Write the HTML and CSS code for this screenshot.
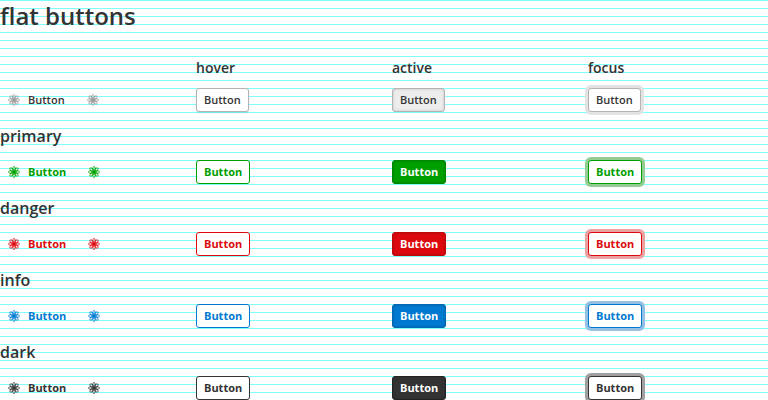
FILE: index.html
```html
<!DOCTYPE html>
<html lang="en">
<head>
<meta charset="utf-8">
<title>flat buttons</title>
<link rel="stylesheet" href="styles.css">
</head>
<body>
<svg class="sprite" aria-hidden="true">
  <symbol id="atom" viewBox="0 0 12 12">
    <g fill="none" stroke="currentColor" stroke-width="0.75">
      <ellipse cx="6" cy="6" rx="5.6" ry="1.8"/>
      <ellipse cx="6" cy="6" rx="5.6" ry="1.8" transform="rotate(45 6 6)"/>
      <ellipse cx="6" cy="6" rx="5.6" ry="1.8" transform="rotate(90 6 6)"/>
      <ellipse cx="6" cy="6" rx="5.6" ry="1.8" transform="rotate(135 6 6)"/>
    </g>
    <circle cx="6" cy="6" r="1.5" fill="currentColor"/>
  </symbol>
</svg>
<main>
  <h1>flat buttons</h1>
  <div class="grid heads">
    <span></span>
    <h3>hover</h3>
    <h3>active</h3>
    <h3>focus</h3>
  </div>
  <div class="grid plain">
    <div class="pair">
      <button class="btn" type="button"><svg class="icon"><use href="#atom"/></svg>Button</button>
      <button class="btn" type="button" aria-label="Atom"><svg class="icon"><use href="#atom"/></svg></button>
    </div>
    <div><button class="btn hover" type="button">Button</button></div>
    <div><button class="btn active" type="button">Button</button></div>
    <div><button class="btn focus" type="button">Button</button></div>
  </div>
  <h2>primary</h2>
  <div class="grid tone primary">
    <div class="pair">
      <button class="btn" type="button"><svg class="icon"><use href="#atom"/></svg>Button</button>
      <button class="btn" type="button" aria-label="Atom"><svg class="icon"><use href="#atom"/></svg></button>
    </div>
    <div><button class="btn hover" type="button">Button</button></div>
    <div><button class="btn active" type="button">Button</button></div>
    <div><button class="btn focus" type="button">Button</button></div>
  </div>
  <h2>danger</h2>
  <div class="grid tone danger">
    <div class="pair">
      <button class="btn" type="button"><svg class="icon"><use href="#atom"/></svg>Button</button>
      <button class="btn" type="button" aria-label="Atom"><svg class="icon"><use href="#atom"/></svg></button>
    </div>
    <div><button class="btn hover" type="button">Button</button></div>
    <div><button class="btn active" type="button">Button</button></div>
    <div><button class="btn focus" type="button">Button</button></div>
  </div>
  <h2>info</h2>
  <div class="grid tone info">
    <div class="pair">
      <button class="btn" type="button"><svg class="icon"><use href="#atom"/></svg>Button</button>
      <button class="btn" type="button" aria-label="Atom"><svg class="icon"><use href="#atom"/></svg></button>
    </div>
    <div><button class="btn hover" type="button">Button</button></div>
    <div><button class="btn active" type="button">Button</button></div>
    <div><button class="btn focus" type="button">Button</button></div>
  </div>
  <h2>dark</h2>
  <div class="grid tone dark">
    <div class="pair">
      <button class="btn" type="button"><svg class="icon"><use href="#atom"/></svg>Button</button>
      <button class="btn" type="button" aria-label="Atom"><svg class="icon"><use href="#atom"/></svg></button>
    </div>
    <div><button class="btn hover" type="button">Button</button></div>
    <div><button class="btn active" type="button">Button</button></div>
    <div><button class="btn focus" type="button">Button</button></div>
  </div>
</main>
</body>
</html>
```
FILE: styles.css
```css
* {
  box-sizing: border-box;
}

html {
  overflow: hidden;
}

body {
  margin: 0;
  color: #333;
  font-family: "Open Sans", sans-serif;
  background: #fff linear-gradient(#80ffff 1px, transparent 1px) 0 0 / 100% 8px;
}

.sprite {
  display: none;
}

h1,
h2,
h3 {
  margin: 0;
  font-weight: 600;
}

h1 {
  margin-bottom: 24px;
  font-size: 24px;
  line-height: 32px;
}

h2 {
  margin: 12px 0;
  font-size: 16px;
  line-height: 24px;
}

h3 {
  font-size: 14px;
  line-height: 24px;
}

.grid {
  display: grid;
  grid-template-columns: repeat(4, minmax(0, 1fr));
  gap: 16px;
}

.heads {
  margin-bottom: 8px;
}

.grid > div {
  display: flex;
}

.pair {
  gap: 6px;
}

.btn {
  display: flex;
  align-items: center;
  gap: 8px;
  height: 24px;
  padding: 0 7px;
  border: 1px solid transparent;
  border-radius: 3px;
  background: transparent;
  color: #333;
  font: 600 11px/22px "Open Sans", sans-serif;
}

.icon {
  width: 12px;
  height: 12px;
}

.plain .icon {
  color: #999;
}

.plain .hover,
.plain .focus {
  border-color: #b3b3b3;
  background: #fff;
}

.plain .hover {
  box-shadow: 0 1px 2px rgba(0, 0, 0, 0.12);
}

.plain .active {
  border-color: #b3b3b3;
  background: #ededed;
  box-shadow: inset 0 0 3px rgba(0, 0, 0, 0.2);
}

.plain .focus {
  box-shadow: 0 0 0 3px #e3e3e3;
}

.tone .btn {
  color: var(--tone);
  font-weight: 700;
}

.tone .hover,
.tone .focus {
  border-color: var(--tone);
  background: #fff;
}

.tone .active {
  border-color: var(--edge);
  background: var(--tone);
  box-shadow: inset 0 0 3px rgba(0, 0, 0, 0.2);
  color: #fff;
}

.tone .focus {
  box-shadow: 0 0 0 3px var(--ring);
}

.primary {
  --tone: #009f00;
  --edge: #008500;
  --ring: #94cc94;
}

.danger {
  --tone: #dc0a0f;
  --edge: #bd080c;
  --ring: #e9a3a3;
}

.info {
  --tone: #007ad0;
  --edge: #0068b3;
  --ring: #94c0e3;
}

.dark {
  --tone: #333;
  --edge: #222;
  --ring: #a0a0a0;
}
```
